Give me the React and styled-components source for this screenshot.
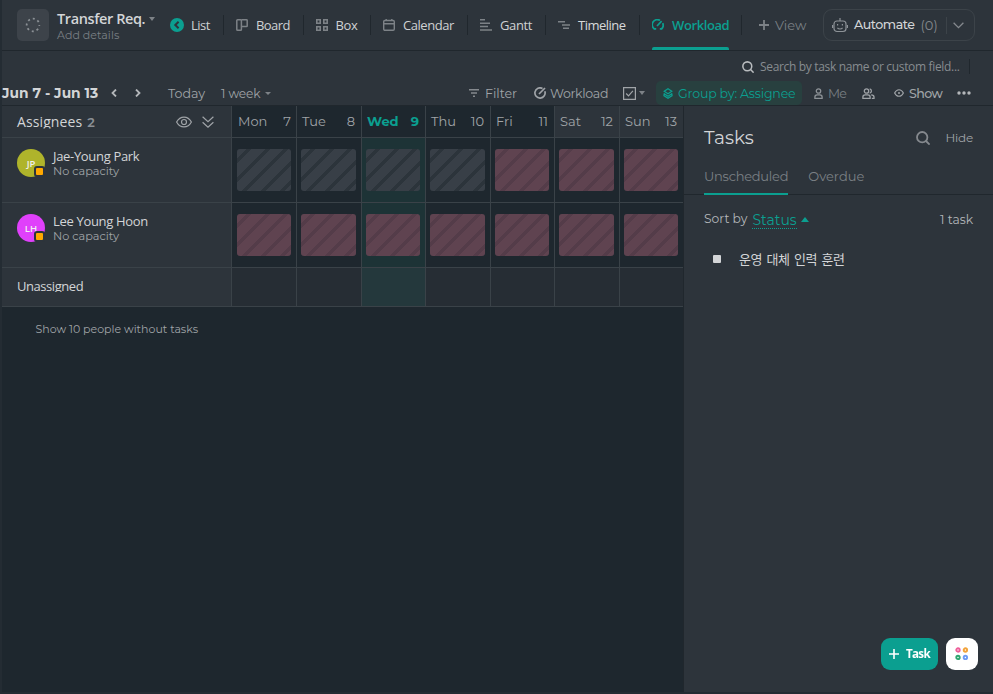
import React from "react";
import styled, { createGlobalStyle, css } from "styled-components";

const Global = createGlobalStyle`
  *, *::after { box-sizing: border-box; }
  html, body { margin: 0; background: #1e272e; }
  body { width: 993px; height: 694px; overflow: hidden; font-family: Inter, "Liberation Sans", sans-serif; color: #d3d5d7; }
`;

const gotham = css`font-family: Montserrat, Gotham, Inter, sans-serif;`;
const segoe = css`font-family: "Open Sans", "Noto Sans", sans-serif;`;

const Text = styled.span`
  ${(p) => (p.$ui ? segoe : gotham)}
  font-size: ${(p) => p.$size || 12.6}px;
  line-height: ${(p) => p.$lh || 18}px;
  font-weight: ${(p) => p.$weight || 400};
  letter-spacing: ${(p) => p.$ls || 0}px;
  color: ${(p) => p.$color || "#a0a4a8"};
  white-space: nowrap;
  ${(p) => p.$clip && css`clip-path: inset(0 -4px ${p.$clip}px -4px);`}
`;

const Page = styled.div`
  width: 993px;
  height: 694px;
  display: flex;
  flex-direction: column;
  background: #1e272e;
  border-left: 2px solid #242c33;
  border-bottom: 2px solid #242c33;
`;

const Header = styled.header`
  height: 51px;
  flex: none;
  display: flex;
  background: #2d343b;
  border-bottom: 1px solid #20272d;
`;

const SpaceIcon = styled.div`
  width: 32px;
  height: 32px;
  margin: 9px 8px 0 15px;
  border-radius: 5px;
  background: #3d434a;
  display: grid;
  place-items: center;
`;

const TitleBlock = styled.div`
  width: 111px;
  flex: none;
  padding-top: 9px;
  display: flex;
  flex-direction: column;
`;

const TitleRow = styled.div`
  display: flex;
  align-items: center;
  gap: 4px;
`;

const Caret = styled.i`
  width: 0;
  height: 0;
  flex: none;
  border: ${(p) => p.$size || 3.5}px solid transparent;
  ${(p) => (p.$up ? "border-bottom" : "border-top")}: ${(p) => (p.$size || 3.5) + 0.5}px solid ${(p) => p.$color || "#7d8287"};
  ${(p) => (p.$up ? "border-top" : "border-bottom")}: 0;
`;

const ViewTab = styled.div`
  width: ${(p) => p.$w}px;
  height: 50px;
  flex: none;
  display: flex;
  align-items: center;
  padding-left: ${(p) => p.$pad ?? 12}px;
  gap: ${(p) => p.$gap ?? 8}px;
  position: relative;
  &::after {
    content: "";
    position: absolute;
    right: 0;
    top: 15px;
    height: 20px;
    width: 1px;
    background: #20272d;
  }
  svg { flex: none; }
`;

const ActiveBar = styled.div`
  position: absolute;
  left: 12px;
  bottom: 0;
  width: 77px;
  height: 3px;
  border-radius: 2px 2px 0 0;
  background: #0b9f90;
`;

const AddView = styled.div`
  display: flex;
  align-items: center;
  width: 81px;
  flex: none;
  padding-left: 17px;
  gap: 6px;
`;

const Automate = styled.div`
  width: 152px;
  height: 32px;
  margin-top: 9px;
  border: 1px solid #3c4349;
  border-radius: 9px;
  display: flex;
  align-items: center;
  padding-left: 8px;
  gap: 6px;
  svg { flex: none; }
`;

const Divider = styled.div`
  width: 1px;
  height: ${(p) => p.$h}px;
  background: ${(p) => p.$color};
  margin: ${(p) => p.$m || 0};
  flex: none;
`;

const Toolbar = styled.div`
  height: 55px;
  flex: none;
  background: #2d343b;
  border-bottom: 1px solid #20272d;
`;

const SearchRow = styled.div`
  height: 30px;
  padding: 1px 23px 0 740px;
  display: flex;
  align-items: center;
  justify-content: space-between;
`;

const SearchField = styled.div`
  display: flex;
  align-items: center;
  gap: 6px;
`;

const Controls = styled.div`
  height: 24px;
  display: flex;
  align-items: center;
`;

const Item = styled.div`
  display: flex;
  align-items: center;
  width: ${(p) => p.$w}px;
  flex: none;
  gap: ${(p) => p.$gap ?? 4}px;
  svg { flex: none; }
`;

const Label = styled(Text)`
  padding-top: 1px;
`;

const GroupPill = styled.div`
  width: 146px;
  height: 24px;
  margin-right: 12px;
  flex: none;
  border-radius: 5px;
  background: #28403f;
  display: flex;
  align-items: center;
  padding-left: 7px;
  gap: 5px;
`;

const Main = styled.main`
  flex: 1;
  display: flex;
  min-height: 0;
`;

const Board = styled.section`
  width: 681px;
  flex: none;
`;

const Row = styled.div`
  display: grid;
  grid-template-columns: 229px 65px 65px 64px 65px 64px 65px 64px;
  height: ${(p) => p.$h}px;
`;

const SideCell = styled.div`
  background: #2d343b;
  border-bottom: 1px solid #3a4248;
  display: flex;
  align-items: ${(p) => (p.$top ? "flex-start" : "center")};
  padding: ${(p) => (p.$top ? "11px 0 0 15px" : "0 0 0 15px")};
`;

const DayHead = styled.div`
  border-left: 1px solid #3a4248;
  border-bottom: 1px solid #3a4248;
  background: ${(p) => (p.$weekend ? "#2d343b" : "#1e272e")};
  display: flex;
  align-items: center;
  justify-content: space-between;
  padding: 0 6px 1px 5px;
  &:nth-child(2) { padding-left: 6px; padding-right: 5px; }
`;

const DayCell = styled.div`
  border-left: 1px solid #3a4248;
  border-bottom: 1px solid #3a4248;
  background: ${(p) => (p.$today ? (p.$empty ? "#24383c" : "#1d3336") : p.$empty ? "#262d34" : "#1e272e")};
  padding: 11px 5px 0 4px;
  &:nth-child(2) { padding-left: 5px; }
`;

const stripes = (base, line) =>
  `repeating-linear-gradient(135deg, ${base} 0 6.8px, ${line} 6.8px 10.2px, ${base} 10.2px 13.2px)`;

const CapacityBar = styled.div`
  height: 42px;
  border-radius: 3px;
  background: ${(p) => (p.$over ? stripes("#5f4350", "#543c49") : stripes("#383f47", "#2c343b"))};
`;

const Avatar = styled.div`
  width: 28px;
  height: 28px;
  flex: none;
  border-radius: 50%;
  background: ${(p) => p.$color};
  display: grid;
  place-items: center;
  position: relative;
  margin-right: 8px;
  font: 600 9.5px "Open Sans", sans-serif;
  color: #f0f0f0;
  &::after {
    content: "";
    position: absolute;
    right: 0;
    bottom: 0;
    width: 11px;
    height: 11px;
    border: 2px solid #2d343b;
    border-radius: 3px;
    background: #ffa800;
  }
`;

const Person = styled.div`
  display: flex;
  flex-direction: column;
  margin-top: -1px;
`;

const Count = styled(Text)`
  margin-left: 5px;
`;

const HeadIcons = styled.div`
  margin-left: auto;
  padding-right: 17px;
  display: flex;
  align-items: center;
  gap: 10px;
`;

const Unassigned = styled(Text)`
  margin-bottom: 2px;
`;

const ShowPeople = styled.div`
  padding: 13px 0 0 33.5px;
  display: flex;
`;

const Panel = styled.aside`
  flex: 1;
  background: #2d343b;
  border-left: 1px solid #20272d;
`;

const PanelTitle = styled.div`
  height: 52px;
  padding: 12px 20px 0 20px;
  display: flex;
  align-items: center;
  svg { margin-left: auto; margin-right: 15px; }
`;

const PanelTabs = styled.div`
  height: 37px;
  padding-left: 20px;
  display: flex;
  gap: 20px;
  border-bottom: 1px solid #20272d;
`;

const PanelTab = styled.div`
  height: 37px;
  padding-top: 9px;
  border-bottom: 2px solid ${(p) => (p.$active ? "#0b9f90" : "transparent")};
  display: flex;
`;

const SortRow = styled.div`
  height: 48px;
  padding: 0 20px;
  display: flex;
  align-items: center;
`;

const Status = styled(Text)`
  border-bottom: 1px dotted #0b9f90;
  margin: 3px 4px 0 5px;
`;

const TaskCount = styled(Text)`
  margin: 2px 0 0 auto;
`;

const TaskRow = styled.div`
  height: 32px;
  padding-left: 29px;
  display: flex;
  align-items: center;
  gap: 18px;
`;

const StatusDot = styled.i`
  width: 8px;
  height: 8px;
  border-radius: 1px;
  background: #d3d5d7;
`;

const KoText = styled.span`
  font: 13px/18px "Noto Sans CJK KR", sans-serif;
  letter-spacing: -0.45px;
  word-spacing: 2px;
  color: #d3d5d7;
`;

const Floating = styled.div`
  position: fixed;
  right: 15px;
  bottom: 24px;
  display: flex;
  gap: 8px;
`;

const TaskButton = styled.div`
  width: 57px;
  height: 32px;
  border-radius: 9px;
  background: #0b9f90;
  display: flex;
  align-items: center;
  padding-left: 8px;
  gap: 7px;
`;

const AppsButton = styled.div`
  width: 32px;
  height: 32px;
  border-radius: 9px;
  background: #fff;
  display: grid;
  place-items: center;
`;

const Icon = ({ w = 12, h = w, vb = `0 0 ${w} ${h}`, c = "#7d8287", sw = 1.5, children }) => (
  <svg width={w} height={h} viewBox={vb} fill="none" stroke={c} strokeWidth={sw}>{children}</svg>
);

const SearchIcon = ({ s, c }) => (
  <Icon w={s} vb="0 0 14 14" c={c} sw={1.8}><circle cx="6.2" cy="6.2" r="5.2" /><path d="M10 10l3.6 3.6" /></Icon>
);

const icons = {
  list: <Icon w={14} c="#2d343b" sw={2}><circle cx="7" cy="7" r="7" fill="#0b9f90" stroke="none" /><path d="M8.6 3.7L5.3 7l3.3 3.3" /></Icon>,
  board: <Icon sw={1.5}><rect x=".8" y=".8" width="4.6" height="10.4" rx=".8" /><path d="M5.4 .8h5.1q.7 0 .7 .7v5.4q0 .7-.7 .7H5.4" /></Icon>,
  box: <Icon sw={1.6}><path d="M.8 .8h3.4v3.4H.8zM7.8 .8h3.4v3.4H7.8zM.8 7.8h3.4v3.4H.8zM7.8 7.8h3.4v3.4H7.8z" /></Icon>,
  calendar: <Icon sw={1.4}><rect x=".7" y="1.5" width="10.6" height="9.8" rx="1.2" /><path d="M.7 4.8h10.6M3.2 0v2M8.8 0v2" /></Icon>,
  gantt: <Icon w={12} h={12}><path d="M0 .8h5M0 4.2h10M0 7.6h8M0 11h12" /></Icon>,
  timeline: <Icon w={12} h={8}><path d="M0 .8h7M4 4h8M5 7.2h6" /></Icon>,
  workload: <Icon c="#0b9f90" sw={1.7}><path d="M2.6 10A5 5 0 0 1 8 1.4M10.7 4.2A5 5 0 0 1 9.4 10M5 7L9.6 2.2" /><path d="M1.8 9.9h2.4M7.8 9.9h2.4" /></Icon>,
};

const VIEWS = [
  { name: "List", icon: "list", w: 56, pad: 2, gap: 7, color: "#cfd1d3", ls: -0.5 },
  { name: "Board", icon: "board", w: 80, color: "#cfd1d3", ls: -0.55 },
  { name: "Box", icon: "box", w: 67, gap: 7.5, color: "#cfd1d3", ls: -0.4 },
  { name: "Calendar", icon: "calendar", w: 97, color: "#cfd1d3", ls: -0.45 },
  { name: "Gantt", icon: "gantt", w: 78, color: "#cfd1d3", ls: -0.4 },
  { name: "Timeline", icon: "timeline", w: 94, color: "#d8dadb", ls: -0.5, weight: 500 },
  { name: "Workload", icon: "workload", w: 102, color: "#0b9f90", ls: -0.4, weight: 600, active: true },
];

const DAYS = [["Mon", 7], ["Tue", 8], ["Wed", 9], ["Thu", 10], ["Fri", 11], ["Sat", 12], ["Sun", 13]];

const PEOPLE = [
  { name: "Jae-Young Park", initials: "JP", color: "#afb42b", overFrom: 4 },
  { name: "Lee Young Hoon", initials: "LH", color: "#e040fb", overFrom: 0 },
];

const PersonIcon = ({ two }) => (
  <Icon w={two ? 13 : 9} h={11} c={two ? "#a0a4a8" : "#8d9297"} sw={1.3}>
    <circle cx="4.5" cy="3" r="2.2" />
    <path d="M.9 10.3V9c0-1.4 1-2.2 2.2-2.2h2.8c1.2 0 2.2.8 2.2 2.2v1.3z" />
    {two && <path d="M7.7 .9a2.2 2.2 0 0 1 0 4.3M9.2 6.8c2 0 2.8 1 2.8 2.2v1.3H9.8" />}
  </Icon>
);

export default function App() {
  return (
    <>
      <Global />
      <Page>
        <Header>
          <SpaceIcon>
            <Icon w={16} c="#8b9095" sw={1.8}><circle cx="8" cy="8" r="6.3" strokeDasharray="2 2.95" strokeDashoffset="1" /></Icon>
          </SpaceIcon>
          <TitleBlock>
            <TitleRow><Text $ui $size={14.5} $weight={600} $lh={19} $ls={-0.4} $color="#d3d5d7">Transfer Req.</Text><Caret /></TitleRow>
            <Text $size={11} $lh={14} $ls={0.05} $color="#7b8085">Add details</Text>
          </TitleBlock>
          {VIEWS.map((v) => (
            <ViewTab key={v.name} $w={v.w} $pad={v.pad} $gap={v.gap}>
              {icons[v.icon]}
              <Text $ui $size={13} $ls={v.ls} $color={v.color} $weight={v.weight}>{v.name}</Text>
              {v.active && <ActiveBar />}
            </ViewTab>
          ))}
          <AddView>
            <Icon w={10} sw={1.8}><path d="M5 0v10M0 5h10" /></Icon>
            <Text $size={13} $color="#7b8085">View</Text>
          </AddView>
          <Automate>
            <Icon w={16} h={16} c="#8d9297" sw={1.2}>
              <rect x="2" y="4" width="12" height="10.5" rx="3" />
              <path d="M8 4V1M.6 8v3M15.4 8v3M5.4 10.8c1.4 1.4 3.8 1.4 5.2 0M5.6 7v1.4M10.4 7v1.4" />
            </Icon>
            <Text $size={12.6} $weight={500} $ls={-0.45} $color="#d3d5d7">Automate</Text>
            <Text $size={13} $color="#85898e">(0)</Text>
            <Divider $h={17} $color="#3c4349" $m="0 0 0 2px" />
            <Icon w={11} h={7} c="#85898e" sw={1.3}><path d="M.6 .8l4.9 4.9L10.4 .8" /></Icon>
          </Automate>
        </Header>

        <Toolbar>
          <SearchRow>
            <SearchField>
              <SearchIcon s={12} c="#b9bcbf" />
              <Text $ui $size={12} $ls={-0.33} $color="#878c90">Search by task name or custom field...</Text>
            </SearchField>
            <Divider $h={15} $color="#20272d" />
          </SearchRow>
          <Controls>
            <Item $w={109}><Text $size={13.8} $weight={700} $color="#d3d5d7">Jun 7 - Jun 13</Text></Item>
            <Item $w={57} $gap={18}>
              <Icon w={6} h={8} c="#b4b7ba" sw={1.8}><path d="M5 .5L1.5 4 5 7.5" /></Icon>
              <Icon w={6} h={8} c="#b4b7ba" sw={1.8}><path d="M1 .5L4.5 4 1 7.5" /></Icon>
            </Item>
            <Item $w={53}><Label>Today</Label></Item>
            <Item $w={248}><Label $size={12.2} $ls={-0.1}>1 week</Label><Caret $size={3} /></Item>
            <Item $w={65} $gap={6}>
              <Icon w={10} h={8} c="#85898e" sw={1.5}><path d="M0 .8h10M2 4h6M4 7.2h2" /></Icon>
              <Label>Filter</Label>
            </Item>
            <Item $w={89} $gap={4}>
              <Icon c="#a0a4a8" sw={1.7}><path d="M8.5 1.5A5.1 5.1 0 1 0 10.8 4.2M5 7l6-6" /></Icon>
              <Label $ls={-0.35}>Workload</Label>
            </Item>
            <Item $w={33} $gap={3}>
              <Icon w={13} c="#a0a4a8" sw={1.2}><path d="M.6 .6h11.8v11.8H.6zM3.2 6.5l2.3 2.3 4.4-5" /></Icon>
              <Caret />
            </Item>
            <GroupPill>
              <Icon w={10} h={11} c="#0b9f90" sw={1.2}><path d="M5 .7l3.8 2.5L5 5.7 1.2 3.2zM1.2 5.4L.9 7.6 5 10.3l4.1-2.7-.3-2.2M.9 5.6L5 8.2l4.1-2.6" /></Icon>
              <Label $ls={-0.2} $color="#0b9f90">Group by: Assignee</Label>
            </GroupPill>
            <Item $w={48} $gap={5}><PersonIcon /><Label $color="#7b8085" $ls={-0.7}>Me</Label></Item>
            <Item $w={32}><PersonIcon two /></Item>
            <Item $w={63} $gap={5}>
              <Icon w={10} h={8} c="#a0a4a8" sw={1.1}><path d="M.6 4C2.8 -.4 7.2 -.4 9.4 4 7.2 8.4 2.8 8.4 .6 4z" /><circle cx="5" cy="4" r="1" stroke="none" fill="#a0a4a8" /></Icon>
              <Label $weight={500} $ls={-0.6}>Show</Label>
            </Item>
            <Icon w={14} h={4}><g fill="#b4b7ba" stroke="none"><circle cx="2" cy="2" r="1.7" /><circle cx="7" cy="2" r="1.7" /><circle cx="12" cy="2" r="1.7" /></g></Icon>
          </Controls>
        </Toolbar>

        <Main>
          <Board>
            <Row $h={32}>
              <SideCell>
                <Text $ui $size={14} $color="#d3d5d7" $ls={0.1} $clip={2}>Assignees</Text>
                <Count $size={13} $weight={600} $color="#8b9095">2</Count>
                <HeadIcons>
                  <Icon w={16} h={12} c="#a0a4a8" sw={1.2}><path d="M.6 6C4.2-.6 11.8-.6 15.4 6 11.8 12.6 4.2 12.6.6 6z" /><circle cx="8" cy="6" r="2.5" /></Icon>
                  <Icon w={12} h={12} c="#a0a4a8" sw={1.2}><path d="M.6 .8L6 5.8 11.4 .8M.6 6.2L6 11.2 11.4 6.2" /></Icon>
                </HeadIcons>
              </SideCell>
              {DAYS.map(([d, n], i) => (
                <DayHead key={d} $weekend={i > 4}>
                  <Text $size={13} $weight={i === 2 ? 700 : 400} $color={i === 2 ? "#0b9f90" : undefined}>{d}</Text>
                  <Text $size={13} $weight={i === 2 ? 700 : 400} $color={i === 2 ? "#0b9f90" : undefined}>{n}</Text>
                </DayHead>
              ))}
            </Row>
            {PEOPLE.map((p) => (
              <Row key={p.name} $h={65}>
                <SideCell $top>
                  <Avatar $color={p.color}>{p.initials}</Avatar>
                  <Person>
                    <Text $ui $size={13} $lh={16} $ls={-0.32} $color="#d3d5d7">{p.name}</Text>
                    <Text $size={11.3} $lh={14}>No capacity</Text>
                  </Person>
                </SideCell>
                {DAYS.map(([d], i) => (
                  <DayCell key={d} $today={i === 2}><CapacityBar $over={i >= p.overFrom} /></DayCell>
                ))}
              </Row>
            ))}
            <Row $h={39}>
              <SideCell><Unassigned $ui $size={13} $ls={-0.45} $color="#d3d5d7" $clip={3}>Unassigned</Unassigned></SideCell>
              {DAYS.map(([d], i) => <DayCell key={d} $today={i === 2} $empty />)}
            </Row>
            <ShowPeople><Text $size={11}>Show 10 people without tasks</Text></ShowPeople>
          </Board>

          <Panel>
            <PanelTitle>
              <Text $size={18.5} $lh={24} $color="#d3d5d7">Tasks</Text>
              <SearchIcon s={14} c="#85898e" />
              <Text $size={12} $ls={-0.2}>Hide</Text>
            </PanelTitle>
            <PanelTabs>
              <PanelTab $active><Text $size={13} $ls={-0.25} $color="#7b8085">Unscheduled</Text></PanelTab>
              <PanelTab><Text $size={13} $color="#7b8085">Overdue</Text></PanelTab>
            </PanelTabs>
            <SortRow>
              <Text $size={12.3} $color="#b4b7ba">Sort by</Text>
              <Status $size={14} $lh={16} $color="#0b9f90">Status</Status>
              <Caret $up $size={4.5} $color="#0b9f90" />
              <TaskCount $size={12.3} $color="#b4b7ba">1 task</TaskCount>
            </SortRow>
            <TaskRow><StatusDot /><KoText>운영 대체 인력 훈련</KoText></TaskRow>
          </Panel>
        </Main>
        <Floating>
          <TaskButton>
            <Icon w={10} c="#fff" sw={1.6}><path d="M5 0v10M0 5h10" /></Icon>
            <Text $ui $size={11.6} $weight={700} $color="#fff" $ls={-0.7}>Task</Text>
          </TaskButton>
          <AppsButton>
            <Icon w={14} sw={1.9}>
              <circle cx="3" cy="3" r="1.7" stroke="#ee5e99" /><circle cx="10.4" cy="3" r="1.7" stroke="#f2a33a" />
              <circle cx="3" cy="10.4" r="1.7" stroke="#2ea56f" /><circle cx="10.4" cy="10.4" r="1.7" stroke="#6f9cf5" />
            </Icon>
          </AppsButton>
        </Floating>
      </Page>
    </>
  );
}
